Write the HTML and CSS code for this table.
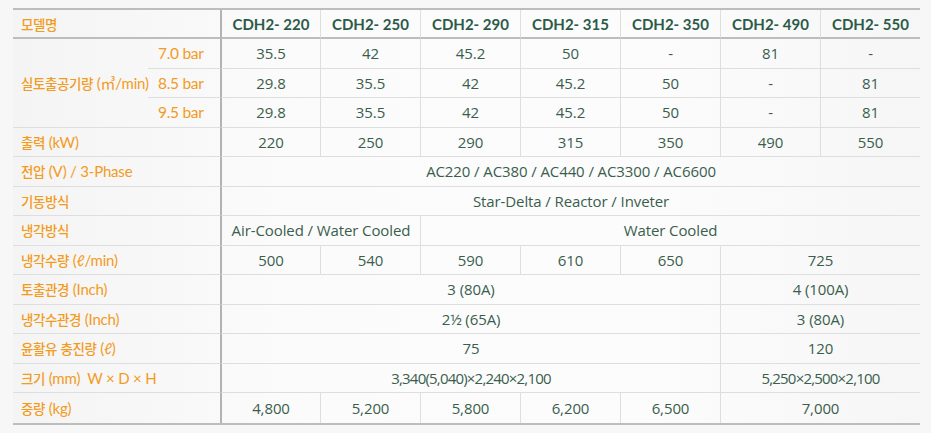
FILE: index.html
```html
<!DOCTYPE html>
<html lang="ko">
<head>
<meta charset="utf-8">
<title>CDH2 사양</title>
<link rel="stylesheet" href="styles.css">
</head>
<body>
<div class="spec">
  <div class="c hd lbl s2">모델명</div>
  <div class="c hd f">CDH2- 220</div><div class="c hd">CDH2- 250</div><div class="c hd">CDH2- 290</div><div class="c hd">CDH2- 315</div><div class="c hd">CDH2- 350</div><div class="c hd">CDH2- 490</div><div class="c hd">CDH2- 550</div>

  <div class="c lbl r3">실토출공기량<span class="en">&nbsp;(㎥/min)</span></div>
  <div class="c sub">7.0 bar</div>
  <div class="c f">35.5</div><div class="c">42</div><div class="c">45.2</div><div class="c">50</div><div class="c">-</div><div class="c">81</div><div class="c">-</div>

  <div class="c sub">8.5 bar</div>
  <div class="c f">29.8</div><div class="c">35.5</div><div class="c">42</div><div class="c">45.2</div><div class="c">50</div><div class="c">-</div><div class="c">81</div>

  <div class="c sub">9.5 bar</div>
  <div class="c f">29.8</div><div class="c">35.5</div><div class="c">42</div><div class="c">45.2</div><div class="c">50</div><div class="c">-</div><div class="c">81</div>

  <div class="c lbl s2">출력<span class="en">&nbsp;(kW)</span></div>
  <div class="c f">220</div><div class="c">250</div><div class="c">290</div><div class="c">315</div><div class="c">350</div><div class="c">490</div><div class="c">550</div>

  <div class="c lbl s2">전압<span class="en">&nbsp;(V) / 3-Phase</span></div>
  <div class="c f s7">AC220 / AC380 / AC440 / AC3300 / AC6600</div>

  <div class="c lbl s2">기동방식</div>
  <div class="c f s7">Star-Delta / Reactor / Inveter</div>

  <div class="c lbl s2">냉각방식</div>
  <div class="c f s2">Air-Cooled / Water Cooled</div>
  <div class="c s5">Water Cooled</div>

  <div class="c lbl s2">냉각수량<span class="en">&nbsp;(ℓ/min)</span></div>
  <div class="c f">500</div><div class="c">540</div><div class="c">590</div><div class="c">610</div><div class="c">650</div><div class="c s2">725</div>

  <div class="c lbl s2">토출관경<span class="en">&nbsp;(Inch)</span></div>
  <div class="c f s5">3 (80A)</div><div class="c s2">4 (100A)</div>

  <div class="c lbl s2">냉각수관경<span class="en">&nbsp;(Inch)</span></div>
  <div class="c f s5">2½ (65A)</div><div class="c s2">3 (80A)</div>

  <div class="c lbl s2">윤활유 충진량<span class="en">&nbsp;(ℓ)</span></div>
  <div class="c f s5">75</div><div class="c s2">120</div>

  <div class="c lbl s2">크기<span class="en">&nbsp;(mm) &nbsp;W × D × H</span></div>
  <div class="c f s5 narrow">3,340(5,040)×2,240×2,100</div><div class="c s2 narrow">5,250×2,500×2,100</div>

  <div class="c lbl s2 last">중량<span class="en">&nbsp;(kg)</span></div>
  <div class="c f last">4,800</div><div class="c last">5,200</div><div class="c last">5,800</div><div class="c last">6,200</div><div class="c last">6,500</div><div class="c s2 last">7,000</div>
</div>
</body>
</html>
```

FILE: styles.css
```css
html, body {
  margin: 0;
  padding: 0;
}
body {
  background: #f7f7f7;
  padding: 8px 0 0 13px;
}
.spec {
  display: grid;
  grid-template-columns: 135px 72px repeat(7, 100px);
  grid-template-rows: 29px repeat(13, 29.5px);
  width: 907px;
  background: linear-gradient(to right, #f4f4f4 0%, #fbfbfb 30%, #fcfcfc 70%, #f6f6f6 100%);
  border-top: 2px solid #bdbdbd;
  border-bottom: 2px solid #bdbdbd;
}
.c {
  box-sizing: border-box;
  display: flex;
  align-items: center;
  justify-content: center;
  border-left: 1px solid #dedede;
  border-bottom: 1px solid #dedede;
  color: #3a5e4d;
  font-family: "Open Sans", "Noto Sans", sans-serif;
  font-size: 15px;
  letter-spacing: -0.1px;
  line-height: 18px;
  white-space: nowrap;
}
.c.last {
  border-bottom: none;
}
.c.f {
  border-left: 2px solid #b3b3b3;
}
.hd {
  border-bottom: 2px solid #bdbdbd;
  font-family: "Lato", "Noto Sans", sans-serif;
  font-weight: 700;
  font-size: 15px;
  letter-spacing: 0;
  color: #2b5a47;
}
.lbl {
  justify-content: flex-start;
  padding-left: 8px;
  border-left: none;
  color: #f39b1d;
  font-family: "Noto Sans CJK KR", sans-serif;
  font-weight: 500;
  font-size: 13.5px;
  letter-spacing: -0.4px;
}
.lbl .en {
  font-family: "Lato", "Noto Sans CJK KR", sans-serif;
  font-weight: 400;
  font-size: 15px;
  letter-spacing: -0.2px;
}
.hd.lbl {
  color: #f39b1d;
  font-weight: 500;
  font-size: 13.5px;
}
.sub {
  justify-content: flex-start;
  padding-left: 10px;
  border-left: none;
  color: #f39b1d;
  font-family: "Lato", sans-serif;
  font-size: 15.5px;
  letter-spacing: -0.3px;
}
.s2 { grid-column: span 2; }
.s5 { grid-column: span 5; }
.s7 { grid-column: span 7; }
.r3 { grid-row: span 3; }
.narrow {
  letter-spacing: -0.8px;
}
```
